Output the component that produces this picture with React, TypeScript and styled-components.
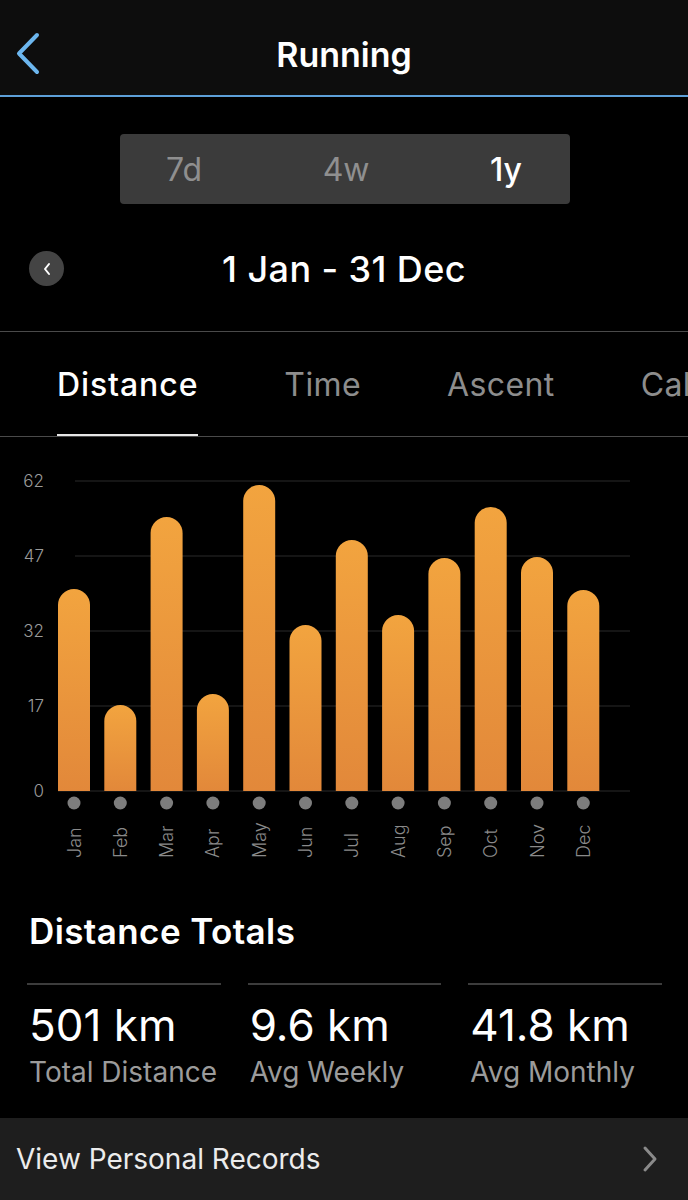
import styled, { createGlobalStyle } from 'styled-components';

const GlobalStyle = createGlobalStyle`
  html, body {
    margin: 0;
    padding: 0;
    background: #000;
  }
  body {
    font-family: Inter, Roboto, 'Liberation Sans', sans-serif;
    color: #fff;
  }
`;

const months = [
  { label: 'Jan', km: 40.4 },
  { label: 'Feb', km: 17.2 },
  { label: 'Mar', km: 54.8 },
  { label: 'Apr', km: 19.4 },
  { label: 'May', km: 61.2 },
  { label: 'Jun', km: 33.2 },
  { label: 'Jul', km: 50.2 },
  { label: 'Aug', km: 35.2 },
  { label: 'Sep', km: 46.6 },
  { label: 'Oct', km: 56.8 },
  { label: 'Nov', km: 46.8 },
  { label: 'Dec', km: 40.2 },
];

const ticks = [62, 47, 32, 17, 0];

const totals = [
  { value: '501 km', label: 'Total Distance' },
  { value: '9.6 km', label: 'Avg Weekly' },
  { value: '41.8 km', label: 'Avg Monthly' },
];

// chart geometry
const BASE = 354;
const PX_PER_KM = 5;
const FIRST_X = 74;
const STEP = 46.3;
const BAR_W = 32;
const AXIS_FONT = 'Inter, Roboto, sans-serif';

export default function App() {
  return (
    <>
      <GlobalStyle />
      <Screen>
        <Header>
          <BackButton aria-label="Back">
            <svg width="26" height="44" viewBox="0 0 26 44">
              <path
                d="M22 4 L4 22.5 L22 41"
                fill="none"
                stroke="#6cb6ee"
                strokeWidth="4"
                strokeLinecap="round"
                strokeLinejoin="round"
              />
            </svg>
          </BackButton>
          <Title>Running</Title>
        </Header>

        <SegmentRow>
          <Segmented>
            <Segment>7d</Segment>
            <Segment>4w</Segment>
            <Segment $active>1y</Segment>
          </Segmented>
        </SegmentRow>

        <DateRow>
          <PrevButton aria-label="Previous">
            <svg width="10" height="14" viewBox="0 0 10 14">
              <path
                d="M7 2 L3 7 L7 12"
                fill="none"
                stroke="#fff"
                strokeWidth="2"
                strokeLinecap="round"
                strokeLinejoin="round"
              />
            </svg>
          </PrevButton>
          <DateLabel>1 Jan - 31 Dec</DateLabel>
        </DateRow>

        <Tabs>
          <Tab $active>Distance</Tab>
          <Tab>Time</Tab>
          <Tab>Ascent</Tab>
          <Tab>Calories</Tab>
        </Tabs>

        <ChartWrap>
          <svg width="688" height="432" viewBox="0 0 688 432">
            <defs>
              <linearGradient id="barFill" x1="0" y1="0" x2="0" y2="1">
                <stop offset="0" stopColor="#f2a43f" />
                <stop offset="1" stopColor="#e2883a" />
              </linearGradient>
            </defs>
            {ticks.map((t) => {
              const y = BASE - t * PX_PER_KM;
              return (
                <g key={t}>
                  <line
                    x1={t === 0 ? 58 : 75}
                    x2={630}
                    y1={y}
                    y2={y}
                    stroke="#2b2b2b"
                    strokeWidth="1"
                  />
                  <text
                    x={44}
                    y={y + 6}
                    textAnchor="end"
                    fill="#9a9a9a"
                    fontSize="17"
                    fontWeight="300"
                    fontFamily={AXIS_FONT}
                  >
                    {t}
                  </text>
                </g>
              );
            })}
            {months.map((m, i) => {
              const cx = FIRST_X + i * STEP;
              const h = m.km * PX_PER_KM;
              const x = cx - BAR_W / 2;
              const top = BASE - h;
              const r = BAR_W / 2;
              return (
                <g key={m.label}>
                  <path
                    d={`M${x} ${BASE} V${top + r} A${r} ${r} 0 0 1 ${x + BAR_W} ${top + r} V${BASE} Z`}
                    fill="url(#barFill)"
                  />
                  <circle cx={cx} cy={366} r={6.5} fill="#7d7d7d" />
                  <text
                    transform={`translate(${cx + 6.5} 421) rotate(-90)`}
                    textAnchor="start"
                    fill="#8a8a8a"
                    fontSize="18"
                    fontWeight="300"
                    fontFamily={AXIS_FONT}
                  >
                    {m.label}
                  </text>
                </g>
              );
            })}
          </svg>
        </ChartWrap>

        <Totals>
          <SectionTitle>Distance Totals</SectionTitle>
          <StatGrid>
            {totals.map((s) => (
              <Stat key={s.label}>
                <StatValue>{s.value}</StatValue>
                <StatLabel>{s.label}</StatLabel>
              </Stat>
            ))}
          </StatGrid>
        </Totals>

        <RecordsRow>
          <span>View Personal Records</span>
          <svg width="16" height="28" viewBox="0 0 16 28">
            <path
              d="M3 3 L13 14 L3 25"
              fill="none"
              stroke="#8a8a8a"
              strokeWidth="3"
              strokeLinecap="round"
              strokeLinejoin="round"
            />
          </svg>
        </RecordsRow>
      </Screen>
    </>
  );
}

const Screen = styled.div`
  width: 688px;
  height: 1200px;
  overflow: hidden;
  background: #000;
  display: flex;
  flex-direction: column;
`;

const Header = styled.header`
  position: relative;
  height: 97px;
  box-sizing: border-box;
  padding-top: 13px;
  flex: none;
  display: flex;
  align-items: center;
  justify-content: center;
  background: #0d0d0d;
  border-bottom: 2px solid #5d9fd8;
`;

const BackButton = styled.div`
  position: absolute;
  left: 15px;
  top: 31px;
  display: flex;
`;

const Title = styled.h1`
  margin: 0;
  font-size: 34px;
  font-weight: 600;
`;

const SegmentRow = styled.div`
  flex: none;
  display: flex;
  justify-content: center;
  padding-top: 37px;
`;

const Segmented = styled.div`
  width: 450px;
  height: 70px;
  margin-left: 2px;
  box-sizing: border-box;
  padding: 0 48px 0 46px;
  display: flex;
  align-items: center;
  justify-content: space-between;
  background: #3b3b3b;
  border-radius: 4px;
`;

const Segment = styled.div<{ $active?: boolean }>`
  font-size: 32px;
  font-weight: ${(p) => (p.$active ? 500 : 400)};
  color: ${(p) => (p.$active ? '#fff' : '#8f8f8f')};
`;

const DateRow = styled.div`
  position: relative;
  flex: none;
  height: 127px;
  display: flex;
  align-items: center;
  justify-content: center;
  border-bottom: 1px solid #4a4a4a;
`;

const PrevButton = styled.div`
  position: absolute;
  left: 29px;
  top: 47px;
  width: 35px;
  height: 35px;
  border-radius: 50%;
  background: #444;
  display: flex;
  align-items: center;
  justify-content: center;
`;

const DateLabel = styled.div`
  font-size: 36px;
  font-weight: 500;
  letter-spacing: 0.4px;
  margin-top: 2px;
`;

const Tabs = styled.nav`
  flex: none;
  height: 104px;
  display: flex;
  gap: 86px;
  padding-left: 57px;
  white-space: nowrap;
  overflow: hidden;
  border-bottom: 1px solid #4a4a4a;
`;

const Tab = styled.div<{ $active?: boolean }>`
  display: flex;
  align-items: center;
  font-size: 32px;
  letter-spacing: ${(p) => (p.$active ? '0.9px' : '0.4px')};
  font-weight: ${(p) => (p.$active ? 500 : 400)};
  color: ${(p) => (p.$active ? '#fff' : '#8d8d8d')};
  border-bottom: 2px solid ${(p) => (p.$active ? '#e6e6e6' : 'transparent')};
  padding-top: 2px;
`;

const ChartWrap = styled.div`
  flex: none;
  height: 432px;
  display: flex;
`;

const Totals = styled.section`
  flex: none;
  padding: 41px 26px 0 27px;
  height: 249px;
  box-sizing: border-box;
`;

const SectionTitle = styled.h2`
  margin: 0 0 0 2px;
  font-size: 35px;
  font-weight: 600;
  letter-spacing: 0.4px;
  line-height: 42px;
`;

const StatGrid = styled.div`
  margin-top: 31px;
  display: grid;
  grid-template-columns: repeat(3, 1fr);
  column-gap: 27px;
`;

const Stat = styled.div`
  border-top: 2px solid #3c3c3c;
  padding: 15px 0 0 2px;
  display: flex;
  flex-direction: column;
`;

const StatValue = styled.div`
  font-size: 44px;
  line-height: 50px;
  font-weight: 400;
`;

const StatLabel = styled.div`
  margin-top: 4px;
  font-size: 28px;
  line-height: 36px;
  color: #9b9b9b;
`;

const RecordsRow = styled.div`
  flex: 1;
  display: flex;
  align-items: center;
  justify-content: space-between;
  padding: 0 30px 0 16px;
  background: #1e1e1e;
  font-size: 28px;
  color: #ececec;
`;
